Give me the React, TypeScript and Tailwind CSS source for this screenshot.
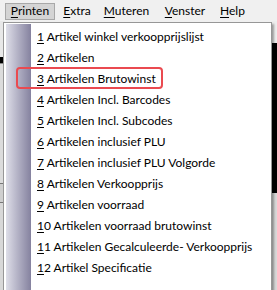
const items = [
  ['1', ' Artikel winkel verkoopprijslijst'],
  ['2', ' Artikelen'],
  ['3', ' Artikelen Brutowinst'],
  ['4', ' Artikelen Incl. Barcodes'],
  ['5', ' Artikelen Incl. Subcodes'],
  ['6', ' Artikelen inclusief PLU'],
  ['7', ' Artikelen inclusief PLU Volgorde'],
  ['8', ' Artikelen Verkoopprijs'],
  ['9', ' Artikelen voorraad'],
  ['1', '0 Artikelen voorraad brutowinst'],
  ['1', '1 Artikelen Gecalculeerde- Verkoopprijs'],
  ['1', '2 Artikel Specificatie'],
]

export default function App() {
  return (
    <div
      className="relative w-[277px] h-[290px] overflow-hidden bg-[#f0f0f0] text-[12px] leading-[18px] text-black"
      style={{ fontFamily: 'Lato, "Noto Sans", sans-serif' }}
    >
      {/* menubar */}
      <div className="flex h-[21px] items-center pl-[5px]">
        <div className="w-[50px] h-[17px] mt-[1px] flex items-center justify-center bg-[#d4d4d4] border border-[#a8a8a8]">
          <span><u className="underline-offset-2">P</u>rinten</span>
        </div>
        <div className="w-[44px] flex justify-center">
          <span><u className="underline-offset-2">E</u>xtra</span>
        </div>
        <div className="w-[55px] flex justify-center">
          <span><u className="underline-offset-2">M</u>uteren</span>
        </div>
        <div className="w-[62px] flex justify-center">
          <span><u className="underline-offset-2">V</u>enster</span>
        </div>
        <div className="w-[33px] flex justify-center">
          <span><u className="underline-offset-2">H</u>elp</span>
        </div>
      </div>

      {/* app content behind the menu */}
      <div className="flex h-[269px]">
        <div className="w-[5px] flex flex-col">
          <div className="h-[36px] bg-[#e8e8e8]" />
          <div className="h-[6px] bg-black" />
          <div className="h-[120px] bg-[#dcdcdc] border-t border-[#888]" />
          <div className="h-[20px] bg-[#cfcfcf] border-y border-[#777]" />
          <div className="flex-1 bg-[#d8d8d8]" />
        </div>
        <div className="flex-1" />
        <div className="w-[5px] flex flex-col">
          <div className="h-[22px] bg-[#ededed]" />
          <div className="h-[150px] bg-black" />
          <div className="flex-1 bg-[#d8d8d8]" />
        </div>
      </div>

      {/* dropdown */}
      <div className="absolute left-[3px] top-[22px] w-[269px] h-[280px] bg-white border border-[#979797] shadow-[2px_2px_2px_rgba(0,0,0,0.35)]">
        <div className="absolute left-[2px] top-[1px] bottom-0 w-[25px] bg-gradient-to-r from-[#dedee8] to-[#85829f]" />
        <div className="relative flex flex-col pt-[3px]">
          {items.map(([u, rest], i) => (
            <div
              key={i}
              className="h-[21px] leading-[21px] pl-[33px] whitespace-pre"
            >
              <u className="underline-offset-2">{u}</u>
              {rest}
            </div>
          ))}
        </div>
        <div className="absolute left-[12px] top-[44px] w-[147px] h-[22px] rounded-[4px] border-2 border-[#ea4a50]" />
      </div>
    </div>
  )
}
